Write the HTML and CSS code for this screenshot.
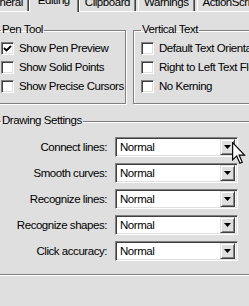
FILE: index.html
```html
<!DOCTYPE html>
<html lang="en">
<head>
    <meta charset="UTF-8">
    <title>Preferences - Editing</title>
    <link rel="stylesheet" href="styles.css">
</head>
<body>
    <div class="tabs">
        <div class="tab">General</div>
        <div class="tab active">Editing</div>
        <div class="tab">Clipboard</div>
        <div class="tab">Warnings</div>
        <div class="tab">ActionScript</div>
    </div>

    <div class="panel">
        <div class="top-groups">
            <fieldset class="group pen">
                <legend>Pen Tool</legend>
                <label class="check">
                    <span class="box"><svg width="9" height="9" viewBox="0 0 9 9"><polyline points="1,4 3.5,6.5 8,2" fill="none" stroke="#000" stroke-width="1.8"/></svg></span>
                    Show Pen Preview
                </label>
                <label class="check"><span class="box"></span>Show Solid Points</label>
                <label class="check"><span class="box"></span>Show Precise Cursors</label>
            </fieldset>
            <fieldset class="group vtext">
                <legend>Vertical Text</legend>
                <label class="check"><span class="box"></span>Default Text Orientation</label>
                <label class="check"><span class="box"></span>Right to Left Text Flow</label>
                <label class="check"><span class="box"></span>No Kerning</label>
            </fieldset>
        </div>

        <fieldset class="group drawing">
            <legend>Drawing Settings</legend>
            <div class="settings">
                <span class="lbl">Connect lines:</span>
                <div class="combo"><span>Normal</span><span class="drop"><svg width="7" height="4" viewBox="0 0 7 4"><polygon points="0,0 7,0 3.5,4" fill="#000"/></svg></span></div>
                <span class="lbl">Smooth curves:</span>
                <div class="combo"><span>Normal</span><span class="drop"><svg width="7" height="4" viewBox="0 0 7 4"><polygon points="0,0 7,0 3.5,4" fill="#000"/></svg></span></div>
                <span class="lbl">Recognize lines:</span>
                <div class="combo"><span>Normal</span><span class="drop"><svg width="7" height="4" viewBox="0 0 7 4"><polygon points="0,0 7,0 3.5,4" fill="#000"/></svg></span></div>
                <span class="lbl">Recognize shapes:</span>
                <div class="combo"><span>Normal</span><span class="drop"><svg width="7" height="4" viewBox="0 0 7 4"><polygon points="0,0 7,0 3.5,4" fill="#000"/></svg></span></div>
                <span class="lbl">Click accuracy:</span>
                <div class="combo"><span>Normal</span><span class="drop"><svg width="7" height="4" viewBox="0 0 7 4"><polygon points="0,0 7,0 3.5,4" fill="#000"/></svg></span></div>
            </div>
        </fieldset>
    </div>

    <!-- mouse pointer over the first dropdown -->
    <svg class="cursor" width="14" height="22" viewBox="0 0 12 19">
        <path d="M0.5 0.5 L0.5 15.5 L4 12 L6.8 18.3 L8.8 17.4 L6.1 11.3 L10.8 11.3 Z" fill="#fff" stroke="#000" stroke-width="1" stroke-linejoin="miter"/>
    </svg>
</body>
</html>
```

FILE: styles.css
```css
* {
    box-sizing: border-box;
}
body {
    margin: 0;
    width: 249px;
    height: 306px;
    overflow: hidden;
    position: relative;
    background-color: #dfdfdf;
    color: #000;
    font-family: "Liberation Sans", Arial, sans-serif;
    font-size: 11.5px;
    letter-spacing: -0.45px;
}

/* tab strip, top of it is cut off */
.tabs {
    display: flex;
    align-items: flex-end;
    gap: 2px;
    height: 12px;
    margin-left: -21px;
    border-bottom: 1px solid #fff;
}
.tab {
    flex: none;
    height: 17px;
    padding: 1px 5px 0;
    line-height: 15px;
    white-space: nowrap;
    border-left: 1px solid #fff;
    border-right: 1px solid #404040;
    box-shadow: inset -1px 0 #808080;
}
.tab.active {
    height: 19px;
    margin: 0 -2px -1px;
    padding: 0 8px;
    background-color: #dfdfdf;
    position: relative;
}

.panel {
    margin-left: -7px;
    padding-top: 10px;
}
.top-groups {
    display: flex;
    gap: 7px;
}

/* etched group box */
.group {
    margin: 0;
    padding: 0 0 0 7px;
    min-width: 0;
    border: 1px solid #808080;
    box-shadow: inset 1px 1px #fff, 1px 1px #fff;
}
.group legend {
    padding: 0 1px 2px;
    line-height: 15px;
}
.pen {
    flex: none;
    width: 133px;
    height: 82px;
}
.vtext {
    flex: none;
    width: 140px;
    height: 82px;
}

.check {
    display: flex;
    align-items: center;
    gap: 5px;
    height: 18px;
    margin-bottom: 1px;
    white-space: nowrap;
}
.box {
    flex: none;
    display: flex;
    align-items: center;
    justify-content: center;
    width: 13px;
    height: 13px;
    background-color: #fff;
    border: 1px solid;
    border-color: #808080 #fff #fff #808080;
    box-shadow: inset 1px 1px #404040, inset -1px -1px #dfdfdf;
}

.drawing {
    width: 270px;
    margin-top: 9px;
    padding-bottom: 13px;
}
.settings {
    display: grid;
    grid-template-columns: 106px 123px;
    column-gap: 8px;
    row-gap: 6px;
    padding-top: 7px;
}
.lbl {
    text-align: right;
    line-height: 20px;
    white-space: nowrap;
}
.combo {
    display: flex;
    align-items: center;
    height: 20px;
    padding: 2px;
    background-color: #fff;
    border: 1px solid;
    border-color: #808080 #fff #fff #808080;
    box-shadow: inset 1px 1px #404040, inset -1px -1px #dfdfdf;
}
.combo span:first-child {
    padding-left: 2px;
}
.drop {
    display: flex;
    align-items: center;
    justify-content: center;
    width: 15px;
    height: 16px;
    margin-left: auto;
    background-color: #dfdfdf;
    border: 1px solid;
    border-color: #dfdfdf #404040 #404040 #dfdfdf;
    box-shadow: inset 1px 1px #fff, inset -1px -1px #808080;
}

.cursor {
    position: absolute;
    left: 232px;
    top: 142px;
}
```
